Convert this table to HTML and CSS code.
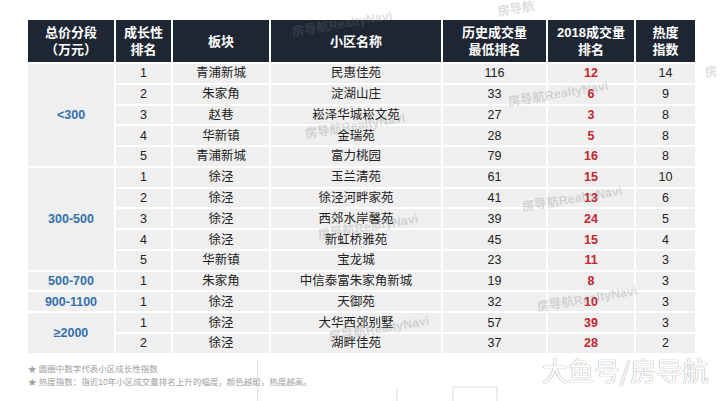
FILE: index.html
```html
<!DOCTYPE html>
<html lang="zh">
<head>
<meta charset="utf-8">
<link rel="stylesheet" href="styles.css">
</head>
<body>
<div class="page">
  <div class="grid">
    <div class="hd">总价分段<br>（万元）</div>
    <div class="hd">成长性<br>排名</div>
    <div class="hd">板块</div>
    <div class="hd">小区名称</div>
    <div class="hd">历史成交量<br>最低排名</div>
    <div class="hd">2018成交量<br>排名</div>
    <div class="hd">热度<br>指数</div>

    <div class="c grp span5">&lt;300</div>
    <div class="c">1</div><div class="c">青浦新城</div><div class="c">民惠佳苑</div><div class="c">116</div><div class="c red">12</div><div class="c">14</div>
    <div class="c">2</div><div class="c">朱家角</div><div class="c">淀湖山庄</div><div class="c">33</div><div class="c red">6</div><div class="c">9</div>
    <div class="c">3</div><div class="c">赵巷</div><div class="c">崧泽华城崧文苑</div><div class="c">27</div><div class="c red">3</div><div class="c">8</div>
    <div class="c">4</div><div class="c">华新镇</div><div class="c">金瑞苑</div><div class="c">28</div><div class="c red">5</div><div class="c">8</div>
    <div class="c">5</div><div class="c">青浦新城</div><div class="c">富力桃园</div><div class="c">79</div><div class="c red">16</div><div class="c">8</div>

    <div class="c grp span5">300-500</div>
    <div class="c">1</div><div class="c">徐泾</div><div class="c">玉兰清苑</div><div class="c">61</div><div class="c red">15</div><div class="c">10</div>
    <div class="c">2</div><div class="c">徐泾</div><div class="c">徐泾河畔家苑</div><div class="c">41</div><div class="c red">13</div><div class="c">6</div>
    <div class="c">3</div><div class="c">徐泾</div><div class="c">西郊水岸馨苑</div><div class="c">39</div><div class="c red">24</div><div class="c">5</div>
    <div class="c">4</div><div class="c">徐泾</div><div class="c">新虹桥雅苑</div><div class="c">45</div><div class="c red">15</div><div class="c">4</div>
    <div class="c">5</div><div class="c">华新镇</div><div class="c">宝龙城</div><div class="c">23</div><div class="c red">11</div><div class="c">3</div>

    <div class="c grp">500-700</div>
    <div class="c">1</div><div class="c">朱家角</div><div class="c">中信泰富朱家角新城</div><div class="c">19</div><div class="c red">8</div><div class="c">3</div>

    <div class="c grp">900-1100</div>
    <div class="c">1</div><div class="c">徐泾</div><div class="c">天御苑</div><div class="c">32</div><div class="c red">10</div><div class="c">3</div>

    <div class="c grp span2">≥2000</div>
    <div class="c">1</div><div class="c">徐泾</div><div class="c">大华西郊别墅</div><div class="c">57</div><div class="c red">39</div><div class="c">3</div>
    <div class="c">2</div><div class="c">徐泾</div><div class="c">湖畔佳苑</div><div class="c">37</div><div class="c red">28</div><div class="c">2</div>
  </div>

  <div class="notes">
    <p>★ 圆圈中数字代表小区成长性指数</p>
    <p>★ 热度指数：指近10年小区成交量排名上升的幅度，颜色越暖，热度越高。</p>
  </div>
</div>

<div class="deco deco-line"></div>
<div class="deco deco-line2"></div>
<div class="deco deco-box"></div>

<span class="wm wm1">房导航RealtyNavi</span>
<span class="wm wm2">房导航RealtyNavi</span>
<span class="wm wm3">房导航RealtyNavi</span>
<span class="wm wm4">房导航RealtyNavi</span>
<span class="wm wm5">房导航</span>
<span class="wm wm6">房导航RealtyNavi</span>
<span class="wm wm7">房导航RealtyNavi</span>
<span class="wm wm8">房导航RealtyNavi</span>
<span class="wm wm9">房</span>

<div class="brand">大鱼号/房导航</div>
</body>
</html>
```

FILE: styles.css
```css
html, body {
  margin: 0;
  padding: 0;
  background: #ffffff;
}
body {
  width: 720px;
  height: 401px;
  overflow: hidden;
  position: relative;
  font-family: "Liberation Sans", "Noto Sans CJK SC", sans-serif;
}
.page {
  padding: 20px 0 0 28px;
}
.grid {
  display: grid;
  grid-template-columns: 86px 55px 96px 170px 103px 86px 59px;
  grid-template-rows: 42px repeat(14, 18.77px);
  gap: 2px;
}
.hd {
  background: #1f2633;
  color: #ffffff;
  font-weight: bold;
  font-size: 13px;
  line-height: 17px;
  display: flex;
  align-items: center;
  justify-content: center;
  text-align: center;
}
.c {
  background: #efefef;
  color: #222222;
  font-size: 12.5px;
  line-height: 14px;
  display: flex;
  align-items: center;
  justify-content: center;
  white-space: nowrap;
}
.grp {
  color: #3470ad;
  font-weight: bold;
  font-size: 12.5px;
}
.span5 { grid-row: span 5; }
.span2 { grid-row: span 2; }
.red {
  color: #c3262c;
  font-weight: bold;
}
.notes {
  padding-top: 10px;
  color: #a0a0a0;
  font-size: 8.5px;
  line-height: 13px;
}
.notes p {
  margin: 0;
}
.wm {
  position: absolute;
  width: 110px;
  height: 18px;
  line-height: 18px;
  text-align: center;
  font-size: 12.5px;
  font-weight: bold;
  white-space: nowrap;
  color: rgba(120, 120, 120, 0.26);
  transform: rotate(-9.5deg);
  transform-origin: 50% 50%;
}
.wm1 { left: 287px; top: 15px; }
.wm2 { left: 300px; top: 117px; }
.wm3 { left: 313px; top: 218px; }
.wm4 { left: 324px; top: 320px; }
.wm5 { left: 486px; top: 0px; width: 60px; }
.wm6 { left: 503px; top: 85px; }
.wm7 { left: 517px; top: 190px; }
.wm8 { left: 532px; top: 290px; }
.wm9 { left: 703px; top: 63px; width: 16px; }
.brand {
  position: absolute;
  left: 542px;
  top: 353px;
  font-family: "Noto Sans CJK SC", sans-serif;
  font-size: 26px;
  line-height: 34px;
  color: #ffffff;
  text-shadow: 0 0 1px #999, 0 0 1px #aaa;
  white-space: nowrap;
}
.deco {
  position: absolute;
}
.deco-line {
  left: 257px;
  top: 360px;
  width: 1px;
  height: 41px;
  background: #e2e2e2;
}
.deco-line2 {
  left: 396px;
  top: 388px;
  width: 2px;
  height: 13px;
  background: #eeeeee;
}
.deco-box {
  left: 452px;
  top: 386px;
  width: 42px;
  height: 20px;
  border: 2px solid #eeeeee;
}
```
